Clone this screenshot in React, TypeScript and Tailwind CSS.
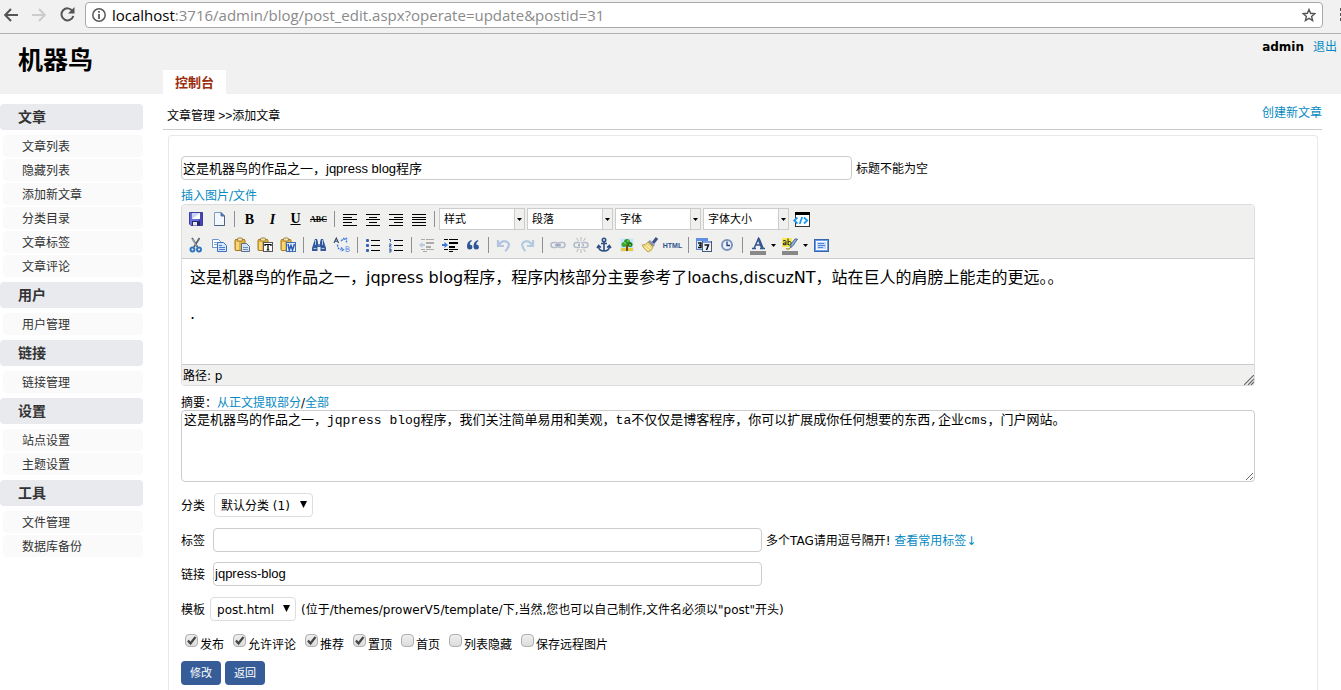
import React, { useState } from 'react';

const menu = [
  { title: '文章', items: ['文章列表', '隐藏列表', '添加新文章', '分类目录', '文章标签', '文章评论'] },
  { title: '用户', items: ['用户管理'] },
  { title: '链接', items: ['链接管理'] },
  { title: '设置', items: ['站点设置', '主题设置'] },
  { title: '工具', items: ['文件管理', '数据库备份'] },
];

const flags = [
  { label: '发布', checked: true },
  { label: '允许评论', checked: true },
  { label: '推荐', checked: true },
  { label: '置顶', checked: true },
  { label: '首页', checked: false },
  { label: '列表隐藏', checked: false },
  { label: '保存远程图片', checked: false },
];

/** Horizontal rules used by the alignment icons, each one [x, y, width] */
const Lines: React.FC<{ rows: number[][]; color?: string }> = ({ rows, color = '#000' }) => (
  <g fill={color} shapeRendering="crispEdges">
    {rows.map(([x, y, w]) => (
      <rect key={`${x}-${y}`} x={x} y={y} width={w} height="1" />
    ))}
  </g>
);

const clipboard = (
  <>
    <rect x="1" y="2.5" width="10" height="11" rx="1" fill="#e3b23c" stroke="#a87a1d" />
    <rect x="3.5" y="1" width="5" height="3" rx="1" fill="#f4e7b5" stroke="#8a6d24" strokeWidth="0.8" />
    <path d="M2 5h3v8H2z" fill="#f6d77c" />
  </>
);

const chain = (
  <g fill="none" stroke="#b4bccb" strokeWidth="1.6">
    <rect x="1" y="5.5" width="7" height="5" rx="2.5" />
    <rect x="8" y="5.5" width="7" height="5" rx="2.5" />
    <path d="M5 8h6" stroke="#98a3b8" />
  </g>
);

const icons: Record<string, React.ReactNode> = {
  save: (
    <>
      <path d="M1.5 1.5h13v13H3l-1.5-1.5z" fill="#6a6dd8" stroke="#3a3d9c" />
      <path d="M9 2h5v12h-2z" fill="#4447b4" />
      <rect x="4" y="2" width="8" height="6" fill="#cdd4f8" />
      <path d="M4 8l8-6v6z" fill="#fff" />
      <rect x="4" y="10" width="8" height="4.5" fill="#25286b" />
      <rect x="5" y="11" width="4" height="3.5" fill="#e8e8f4" />
    </>
  ),
  newdoc: (
    <>
      <path d="M3.5 1.5h6.5l3.5 3.5v9.5h-10z" fill="#f3f8ff" stroke="#7f9cc4" />
      <path d="M10 1.5v3.5h3.5z" fill="#4f7fc0" stroke="#4a6fa8" />
      <path d="M13.5 5v9.5h-10" fill="none" stroke="#4a6285" />
    </>
  ),
  left: <Lines rows={[[1, 3, 14], [1, 6, 9], [1, 8, 14], [1, 11, 9], [1, 14, 14]]} />,
  center: <Lines rows={[[1, 3, 14], [4, 6, 8], [1, 8, 14], [4, 11, 8], [1, 14, 14]]} />,
  right: <Lines rows={[[1, 3, 14], [6, 6, 9], [1, 8, 14], [6, 11, 9], [1, 14, 14]]} />,
  justify: <Lines rows={[[1, 3, 14], [1, 6, 14], [1, 8, 14], [1, 11, 14], [1, 14, 14]]} />,
  code: (
    <>
      <rect x="1.5" y="1.5" width="14" height="14" fill="#fff" stroke="#333" />
      <rect x="1" y="1" width="15" height="3" fill="#000" />
      <path d="M3.5 6.500L.3 9.500l3.200 3M10 6.500l3.200 3-3.200 3M8.200 6l-2.500 7" fill="none" stroke="#1d9bf0" strokeWidth="1.8" />
    </>
  ),
  cut: (
    <>
      <path d="M4 1l5.500 9M11.500 1L6 10" stroke="#5b6673" strokeWidth="1.8" />
      <path d="M4.500 2l4 7" stroke="#c9d2dc" strokeWidth="0.7" />
      <circle cx="4.500" cy="12.500" r="2" fill="none" stroke="#2f74c0" strokeWidth="1.9" />
      <circle cx="11" cy="12.500" r="2" fill="none" stroke="#2f74c0" strokeWidth="1.9" />
    </>
  ),
  copy: (
    <>
      <path d="M1.500 2.500h6l2 2v6h-8z" fill="#fff" stroke="#6c93cc" />
      <path d="M3 5.500h4M3 7.500h5" stroke="#7fa6dc" />
      <path d="M6.500 5.500h6l3 3v6h-9z" fill="#d3e4fd" stroke="#3f6fb5" />
      <path d="M8 8.500h3M8 10.500h6M8 12.500h6" stroke="#4a7cc8" />
    </>
  ),
  paste: (
    <>
      {clipboard}
      <path d="M7.500 6.500h5l3 3v5h-8z" fill="#d5e2f8" stroke="#5b6f90" />
      <path d="M9 10.500h5M9 12.500h5" stroke="#6f8bb5" />
    </>
  ),
  pasteText: (
    <>
      {clipboard}
      <rect x="6.500" y="5.500" width="9" height="9" fill="#fff" stroke="#555" />
      <path d="M8 9V7.500h6V9M11 7.500V13M9.700 13h2.600" fill="none" stroke="#000" strokeWidth="1.2" />
    </>
  ),
  pasteWord: (
    <>
      {clipboard}
      <rect x="6.500" y="5.500" width="9" height="9" fill="#e6efff" stroke="#3f6fb5" />
      <path d="M8 7l1.300 6L11 8.500l1.500 4.500L14.500 7" fill="none" stroke="#2c5bb0" strokeWidth="1.5" />
    </>
  ),
  find: (
    <>
      <path d="M3 5l1-3h2l1 3v2h2V5l1-3h2l1 3 2 6v3H9.500v-4h-3v4H1v-3z" fill="#34589c" />
      <path d="M2.500 11.500h3M10.500 11.500h3M4.500 3v5M11.500 3v5" stroke="#a9c2ec" />
      <path d="M7 8h2" stroke="#8fb0e6" />
    </>
  ),
  replace: (
    <>
      <path d="M0 6l2.300-5 2.300 5M1 4.300h2.800" fill="none" stroke="#39466b" strokeWidth="1.1" />
      <path d="M12 9.500v5h2q1.500 0 1.500-1.300T14 12h-2 1.800q1.200 0 1.200-1.200T13.800 9.500z" fill="none" stroke="#7a9fe8" />
      <path d="M7 4q3-3 5-1M12.500 5.500V1.500H9" fill="none" stroke="#3c78e0" strokeWidth="1.3" strokeDasharray="2 1" />
      <path d="M3.500 7.500q0 5 4 5M7 10.500l2.500 2-2.500 2" fill="none" stroke="#3c78e0" strokeWidth="1.3" strokeDasharray="2 1" />
    </>
  ),
  bullets: (
    <>
      <g fill="#3561ae">
        <rect x="1" y="2" width="3" height="3" rx="1" />
        <rect x="1" y="7" width="3" height="3" rx="1" />
        <rect x="1" y="12" width="3" height="3" rx="1" />
      </g>
      <Lines rows={[[6, 3, 9], [6, 8, 9], [6, 13, 9]]} />
    </>
  ),
  numbers: (
    <>
      <path d="M1 2.500h1.500V5M1 7h2v1.500H1.500V10H3.500M1 12h2v1.200H1.500 3V15H1" fill="none" stroke="#3561ae" />
      <Lines rows={[[6, 3, 9], [6, 8, 9], [6, 13, 9]]} />
    </>
  ),
  outdent: (
    <>
      <Lines color="#aaa" rows={[[2, 2, 4], [7, 2, 8], [7, 5, 8], [7, 6, 8], [7, 9, 5], [7, 10, 5], [2, 12, 4], [7, 12, 8], [4, 14, 4]]} />
      <path d="M0 8l3.500-3v2H6v2H3.500v2z" fill="#b9c9e4" />
    </>
  ),
  indent: (
    <>
      <Lines rows={[[2, 2, 4], [7, 2, 9], [7, 5, 9], [7, 6, 9], [7, 9, 6], [7, 10, 6], [2, 12, 4], [7, 12, 9], [7, 14, 4]]} />
      <path d="M6 8L2.500 5v2H0v2h2.500v2z" fill="#3c78d8" />
    </>
  ),
  quote: (
    <path
      d="M6.500 3Q2 4.500 2 9q0 3.500 2.700 3.500T7.400 10 4.700 7.500Q4.700 5 6.800 4zM13 3q-4.500 1.500-4.500 6 0 3.500 2.700 3.500T13.900 10t-2.700-2.500Q11.200 5 13.300 4z"
      fill="#2f5597"
    />
  ),
  undo: <path d="M2 3v6h6M2.500 8.500Q6 3 10 4.500t2.500 5-3.500 4.500" fill="none" stroke="#b3c4e0" strokeWidth="2.2" />,
  redo: <path d="M14 3v6H8M13.500 8.500Q10 3 6 4.500t-2.500 5 3 4.500" fill="none" stroke="#b3cbe0" strokeWidth="2.2" />,
  link: chain,
  unlink: (
    <>
      {chain}
      <path d="M7 5v6l3-3z" fill="#f0f0ee" />
      <path d="M8 4V0M5.500 4l-2-3M10.500 4l2-3M8 12v4M5.500 12l-2 3M10.500 12l2 3" stroke="#b9b9b9" />
    </>
  ),
  anchor: (
    <g fill="none" stroke="#2b4f86" strokeWidth="1.6">
      <circle cx="8" cy="3" r="1.7" />
      <path d="M8 5v9M5 6.500h6M2.500 9.500q.5 4.500 5.500 4.500t5.500-4.500M1 11l1.700-2.500L5 10.500M15 11l-1.700-2.500L11 10.500" />
    </g>
  ),
  image: (
    <>
      <rect x="1.500" y="1.500" width="13" height="13" fill="#c5e4ff" stroke="#e3eaf0" />
      <rect x="2" y="11" width="12" height="3" fill="#e9c93f" />
      <path d="M7 8h2v6H7z" fill="#7a4a1b" />
      <circle cx="8" cy="5" r="3" fill="#2f9a2b" />
      <circle cx="5" cy="7.500" r="2.500" fill="#3aa832" />
      <circle cx="11" cy="7.500" r="2.500" fill="#1f7d1f" />
      <path d="M5 6h2M8 4h2M10 8h2" stroke="#9bdc6a" />
    </>
  ),
  clean: (
    <>
      <path d="M11 6l4-5" stroke="#3d4f86" strokeWidth="3" />
      <path d="M8 3l5 5-2 2-5.500-5z" fill="#8a94a8" />
      <path d="M6 5l5 5q-1 4-5 5Q2 12 0 8q4 0 6-3z" fill="#f0d77c" stroke="#b59443" strokeWidth="0.8" />
      <path d="M3 10l4 4M5 8l4 4" stroke="#fff4c4" />
    </>
  ),
  date: (
    <>
      <rect x="0.500" y="1.500" width="11" height="11" fill="#dce8fb" stroke="#5a86cf" />
      <rect x="0" y="1" width="12" height="3" fill="#5f8fe0" />
      <path d="M2 6h3v2.200H3 5V10.500H2" fill="none" stroke="#111" strokeWidth="1.4" />
      <rect x="6.500" y="4.500" width="9" height="10" fill="#eef3fb" stroke="#4a5c7d" />
      <rect x="7" y="4" width="8" height="2" fill="#7ea3e0" />
      <path d="M8.500 8h4L10.500 13" fill="none" stroke="#111" strokeWidth="1.5" />
    </>
  ),
  time: (
    <>
      <circle cx="8" cy="8" r="5" fill="#eaf2ff" stroke="#7d94bf" strokeWidth="2" />
      <path d="M8 4.500V8.500h3" fill="none" stroke="#24406f" strokeWidth="1.3" />
    </>
  ),
  forecolor: (
    <>
      <path d="M2 11.500h4M10 11.500h5M4 11.500L8.500 1.500l4 10M5.500 8h6" fill="none" stroke="#35578f" strokeWidth="1.5" />
      <path d="M8.500 1.500l4 10" stroke="#35578f" strokeWidth="2.6" />
      <rect x="0" y="14" width="16" height="4" fill="#888" />
    </>
  ),
  backcolor: (
    <>
      <rect x="0" y="1" width="10" height="9" fill="#f5e94c" />
      <path d="M1 4q3-1.500 3 .5V8M4 6Q1 5.500 1 7t3 .5M6 1.500V8M6 5q3-1.500 3 1.300T6 7.500" fill="none" stroke="#222" />
      <path d="M15.500 2l-4 6-3 3 .500-4 4-5z" fill="#8fb3d9" stroke="#4a6a96" />
      <path d="M8 11q-2 2-4 .5" fill="none" stroke="#a8972c" strokeWidth="1.3" />
      <rect x="0" y="14" width="16" height="4" fill="#888" />
    </>
  ),
  fullscreen: (
    <>
      <rect x="0.500" y="2.500" width="14" height="12" fill="#6a9bea" stroke="#3b64ad" />
      <rect x="2.500" y="4.500" width="10" height="8" fill="#c3d8fc" stroke="#fff" />
      <path d="M4 6.500h6M4 8.500h7M4 10.500h5" stroke="#4f84dc" />
    </>
  ),
};

const ToolButton: React.FC<{ icon?: string; label: string; children?: React.ReactNode }> = ({ icon, label, children }) => (
  <button type="button" aria-label={label} className="flex h-5 w-[23px] shrink-0 items-center justify-center text-black">
    {icon ? (
      <svg width="16" height="16" viewBox="0 0 16 16" className="overflow-visible">
        {icons[icon]}
      </svg>
    ) : (
      children
    )}
  </button>
);

const Separator = () => (
  <span className="flex w-2 shrink-0 justify-center">
    <span className="h-4 w-px bg-[#8f8f95]" />
  </span>
);

const ToolGroup: React.FC<{ names: string[] }> = ({ names }) => (
  <>
    {names.map((name) => (
      <ToolButton key={name} icon={name} label={name} />
    ))}
  </>
);

const DropArrow: React.FC<{ label: string }> = ({ label }) => (
  <button type="button" aria-label={label} className="flex h-5 w-[9px] shrink-0 items-center justify-center">
    <svg width="5" height="3" viewBox="0 0 5 3">
      <path d="M0 0h5L2.500 3z" />
    </svg>
  </button>
);

const ToolSelect: React.FC<{ label: string }> = ({ label }) => (
  <span className="relative block h-[22px] w-[86px] shrink-0">
    <select
      aria-label={label}
      className="h-full w-full appearance-none border border-[#ccc] bg-white pt-px pl-1 text-[11px] leading-4 text-black"
    >
      <option>{label}</option>
    </select>
    <span className="pointer-events-none absolute inset-y-px right-px flex w-[10px] items-center justify-center border-l border-[#ccc] bg-[#f0f0ee]">
      <svg width="5" height="3" viewBox="0 0 5 3">
        <path d="M0 0h5L2.500 3z" />
      </svg>
    </span>
  </span>
);

const FormSelect: React.FC<{ id: string; value: string; width: string }> = ({ id, value, width }) => (
  <span className={`relative block h-6 ${width}`}>
    <select
      id={id}
      className="h-full w-full appearance-none rounded border border-[#ddd] bg-white pt-px pl-[6px] text-xs text-black"
    >
      <option>{value}</option>
    </select>
    <svg width="7" height="7" viewBox="0 0 7 7" className="pointer-events-none absolute top-2 right-[6px]">
      <path d="M0 0h7L3.500 7z" />
    </svg>
  </span>
);

const AddressBar = () => (
  <div className="flex h-[34px] items-center border-b border-[#b1b1b1] bg-[#f1f1f1] pb-1">
    <div className="flex w-[85px] shrink-0 items-center">
      <button type="button" aria-label="后退" className="w-7 pl-1">
        <svg width="14" height="14" viewBox="0 0 14 14" fill="none" stroke="#555" strokeWidth="2">
          <path d="M14 7H1.500M7 1L1.200 7 7 13" />
        </svg>
      </button>
      <button type="button" aria-label="前进" className="w-7 pl-1">
        <svg width="14" height="14" viewBox="0 0 14 14" fill="none" stroke="#ccc" strokeWidth="2">
          <path d="M0 7h12.500M7 1l5.800 6L7 13" />
        </svg>
      </button>
      <button type="button" aria-label="刷新" className="w-7 pl-1">
        <svg width="15" height="15" viewBox="0 0 15 15">
          <path d="M12.500 4A6 6 0 1 0 13.300 9" fill="none" stroke="#555" strokeWidth="2" />
          <path d="M14.500 0v6.500H8z" fill="#555" />
        </svg>
      </button>
    </div>
    <div className="mt-px flex h-[26px] min-w-0 flex-1 items-center rounded-sm border border-[#a9a9a9] bg-white px-[6px]">
      <svg width="14" height="14" viewBox="0 0 14 14" className="mr-[6px] shrink-0">
        <circle cx="7" cy="7" r="6.200" fill="none" stroke="#5a5a5a" strokeWidth="1.5" />
        <path d="M7 6v5M7 3v1.800" stroke="#5a5a5a" strokeWidth="1.8" />
      </svg>
      <div className="flex-1 truncate font-['Open_Sans','Noto_Sans',sans-serif] text-[15px] leading-5 text-[#8a8a8a]">
        <span className="text-black">localhost</span>:3716/admin/blog/post_edit.aspx?operate=update&amp;postid=31
      </div>
      <button type="button" aria-label="收藏">
        <svg width="14" height="14" viewBox="0 0 14 14" fill="none" stroke="#555" strokeWidth="1.4">
          <path d="M7 1.500l1.600 3.800 4.200.4-3.200 2.700 1 4.100L7 10.300l-3.600 2.200 1-4.100L1.200 5.700l4.200-.4z" />
        </svg>
      </button>
    </div>
    <button type="button" aria-label="菜单" className="flex h-5 w-[18px] shrink-0 flex-col items-end justify-center gap-[2px]">
      <span className="h-[3px] w-px bg-[#555]" />
      <span className="h-[3px] w-px bg-[#555]" />
      <span className="h-[3px] w-px bg-[#555]" />
    </button>
  </div>
);

const Sidebar = () => (
  <nav className="flex w-[143px] shrink-0 flex-col gap-[5px] pt-[10px]">
    {menu.map((group) => (
      <div key={group.title}>
        <h2 className="h-[26px] rounded bg-[#e9eaee] pl-[18px] text-[14px] leading-[26px] font-bold text-[#333]">
          {group.title}
        </h2>
        <ul className="mt-[5px] flex flex-col gap-[2px] pl-[3px]">
          {group.items.map((item) => (
            <li key={item}>
              <a href="#" className="block h-[22px] rounded bg-[#fafafa] pl-[19px] leading-6 text-[#333]">
                {item}
              </a>
            </li>
          ))}
        </ul>
      </div>
    ))}
  </nav>
);

const Editor = () => (
  <div className="mr-[50px] rounded border border-[#ddd] bg-white">
    <div className="rounded-t border-b border-[#ccc] bg-[#f0f0ee] pt-px pl-[2px]">
      <div className="flex h-[26px] items-center">
        <ToolGroup names={['save', 'newdoc']} />
        <Separator />
        <ToolButton label="粗体">
          <span className="pt-px font-['Liberation_Serif',serif] text-[14px] font-bold">B</span>
        </ToolButton>
        <ToolButton label="斜体">
          <span className="pt-px font-['Liberation_Serif',serif] text-[14px] font-bold italic">I</span>
        </ToolButton>
        <ToolButton label="下划线">
          <span className="font-['Liberation_Serif',serif] text-[14px] font-bold underline">U</span>
        </ToolButton>
        <ToolButton label="删除线">
          <span className="pt-px font-['Liberation_Serif',serif] text-[8px] font-bold line-through">ABC</span>
        </ToolButton>
        <Separator />
        <ToolGroup names={['left', 'center', 'right', 'justify']} />
        <Separator />
        <div className="flex gap-[2px] px-px">
          <ToolSelect label="样式" />
          <ToolSelect label="段落" />
          <ToolSelect label="字体" />
          <ToolSelect label="字体大小" />
        </div>
        <ToolButton icon="code" label="代码" />
      </div>
      <div className="flex h-[26px] items-center">
        <ToolGroup names={['cut', 'copy', 'paste', 'pasteText', 'pasteWord']} />
        <Separator />
        <ToolGroup names={['find', 'replace']} />
        <Separator />
        <ToolGroup names={['bullets', 'numbers']} />
        <Separator />
        <ToolGroup names={['outdent', 'indent', 'quote']} />
        <Separator />
        <ToolGroup names={['undo', 'redo']} />
        <Separator />
        <ToolGroup names={['link', 'unlink', 'anchor', 'image', 'clean']} />
        <ToolButton label="编辑源码">
          <span className="pt-px font-['Liberation_Sans',sans-serif] text-[7px] font-bold text-[#2f4f8f]">HTML</span>
        </ToolButton>
        <Separator />
        <ToolGroup names={['date', 'time']} />
        <Separator />
        <ToolButton icon="forecolor" label="文字颜色" />
        <DropArrow label="选择文字颜色" />
        <ToolButton icon="backcolor" label="背景颜色" />
        <DropArrow label="选择背景颜色" />
        <ToolButton icon="fullscreen" label="全屏" />
      </div>
    </div>
    <div
      contentEditable
      suppressContentEditableWarning
      className="h-[105px] overflow-hidden px-2 pt-[7px] text-base leading-6 text-black outline-none"
    >
      <p>这是机器鸟的作品之一，jqpress blog程序，程序内核部分主要参考了loachs,discuzNT，站在巨人的肩膀上能走的更远。。</p>
      <p className="mt-3">.</p>
    </div>
    <div className="flex h-[21px] items-center justify-between rounded-b border-t border-[#ccc] bg-[#f0f0ee] pl-px">
      <span className="pt-px">
        路径: <a href="#">p</a>
      </span>
      <svg width="10" height="10" viewBox="0 0 10 10" className="self-end" stroke="#666" strokeWidth="1.2">
        <path d="M0 10L10 0M4 10l6-6M7 10l3-3" />
      </svg>
    </div>
  </div>
);

const App: React.FC = () => {
  const [checks, setChecks] = useState(flags.map((f) => f.checked));

  const toggle = (index: number) => {
    setChecks(checks.map((c, i) => (i === index ? !c : c)));
  };

  return (
    <div className="flex min-h-screen flex-col bg-white font-['DejaVu_Sans','Noto_Sans_CJK_SC',sans-serif] text-xs leading-4 text-black">
      <AddressBar />

      <header className="flex h-[60px] bg-[#f1f1f1]">
        <h1 className="w-[163px] shrink-0 pt-[11px] pl-[18px] text-[25px] leading-8 font-bold">机器鸟</h1>
        <a href="#" className="h-6 self-end bg-white px-3 pt-px text-[13px] leading-6 font-bold text-[#9b2d0c]">
          控制台
        </a>
        <div className="ml-auto flex gap-[9px] pt-[5px] pr-1">
          <b>admin</b>
          <a href="#" className="text-[#058ac2]">退出</a>
        </div>
      </header>

      <div className="flex flex-1">
        <Sidebar />

        <main className="mr-[19px] ml-5 flex min-w-0 flex-1 flex-col">
          <div className="flex h-9 items-center justify-between border-b border-[#ccc] pl-1">
            <span className="pt-2 font-['Liberation_Sans','Noto_Sans_CJK_SC',sans-serif]">文章管理 &gt;&gt;添加文章</span>
            <a href="#" className="pt-[2px] text-[#058ac2]">创建新文章</a>
          </div>

          <form className="mt-[5px] mr-1 ml-[5px] flex-1 rounded-t border border-b-0 border-[#e8e8ec] px-3 pt-5">
            <div className="flex items-center gap-1">
              <input
                id="title"
                defaultValue="这是机器鸟的作品之一，jqpress blog程序"
                className="h-6 w-[671px] rounded border border-[#ccc] px-px pb-[2px] font-['Liberation_Sans','Noto_Sans_CJK_SC',sans-serif] text-[13px]"
              />
              <label htmlFor="title" className="pt-px">标题不能为空</label>
            </div>

            <a href="#" className="mt-[9px] block w-fit leading-[15px] text-[#058ac2]">插入图片/文件</a>
            <Editor />

            <div className="mt-[10px] leading-[14px]">
              <label htmlFor="summary">摘要：</label>
              <a href="#" className="text-[#058ac2]">从正文提取部分</a>/
              <a href="#" className="text-[#058ac2]">全部</a>
            </div>
            <div className="mr-[50px] flex">
              <textarea
                id="summary"
                defaultValue="这是机器鸟的作品之一，jqpress blog程序，我们关注简单易用和美观，ta不仅仅是博客程序，你可以扩展成你任何想要的东西,企业cms，门户网站。"
                className="h-[72px] w-full rounded border border-[#ccc] px-[2px] py-[2px] font-['Liberation_Mono','Noto_Sans_CJK_SC',monospace] text-[13px] leading-4"
              />
            </div>

            <div className="mt-[11px] flex items-center gap-[9px]">
              <label htmlFor="category" className="pt-px">分类</label>
              <FormSelect id="category" value="默认分类 (1)" width="w-[99px]" />
            </div>

            <div className="mt-[11px] flex items-center gap-2">
              <label htmlFor="tags" className="pt-px">标签</label>
              <input id="tags" className="h-6 w-[549px] rounded border border-[#ccc] px-px text-[13px]" />
              <span className="-ml-1 pt-px">
                多个TAG请用逗号隔开! <a href="#" className="text-[#058ac2]">查看常用标签↓</a>
              </span>
            </div>

            <div className="mt-[10px] flex items-center gap-2">
              <label htmlFor="slug" className="pt-px">链接</label>
              <input
                id="slug"
                defaultValue="jqpress-blog"
                className="h-6 w-[549px] rounded border border-[#ccc] px-px pb-[2px] font-['Liberation_Sans',sans-serif] text-[13px]"
              />
            </div>

            <div className="mt-[11px] flex items-center gap-[5px]">
              <label htmlFor="template" className="pt-px">模板</label>
              <FormSelect id="template" value="post.html" width="w-[86px]" />
              <span className="pt-px">(位于/themes/prowerV5/template/下,当然,您也可以自己制作,文件名必须以"post"开头)</span>
            </div>

            <div className="mt-3 flex h-5 items-center gap-[9px] pl-1">
              {flags.map((flag, i) => (
                <label key={flag.label} className="flex items-start gap-[2px]">
                  <span className="relative block h-[13px] w-[13px]">
                    <input
                      type="checkbox"
                      checked={checks[i]}
                      onChange={() => toggle(i)}
                      className="block h-[13px] w-[13px] appearance-none rounded-sm border border-[#b0b0b0] bg-linear-to-b from-[#eee] to-[#ddd]"
                    />
                    {checks[i] && (
                      <svg width="13" height="13" viewBox="0 0 13 13" className="pointer-events-none absolute inset-0">
                        <path d="M3 6.500l2.500 3L10.500 3" fill="none" stroke="#444" strokeWidth="2.2" />
                      </svg>
                    )}
                  </span>
                  <span className="pt-[3px]">{flag.label}</span>
                </label>
              ))}
            </div>

            <div className="mt-2 flex gap-1">
              <button type="submit" className="h-6 w-10 rounded bg-[#365d98] pt-px text-[11px] text-white">修改</button>
              <button type="button" className="h-6 w-10 rounded bg-[#365d98] pt-px text-[11px] text-white">返回</button>
            </div>
          </form>
        </main>
      </div>
    </div>
  );
};

export default App;
